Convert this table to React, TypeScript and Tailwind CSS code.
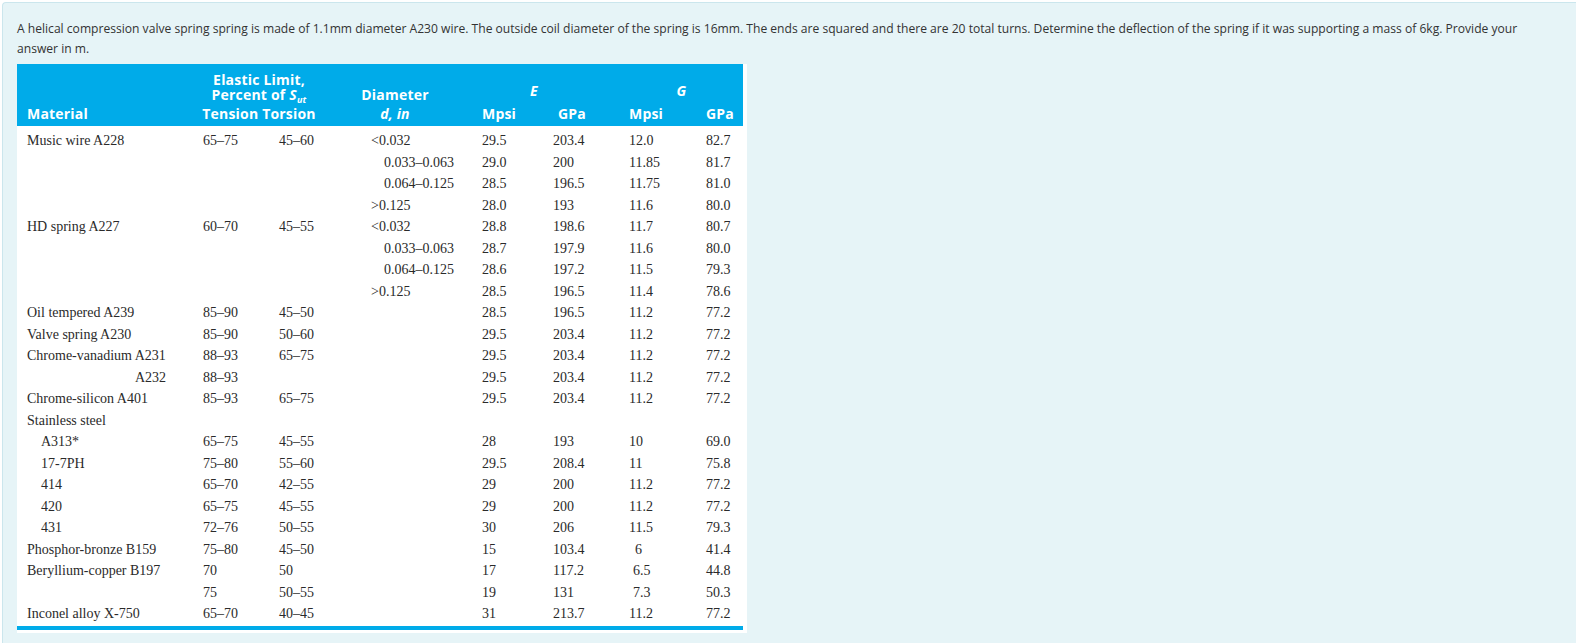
type Row = {
  mat?: string;
  matKind?: "sub" | "right";
  ten?: string;
  tor?: string;
  dia?: string;
  diaSub?: boolean;
  eM?: string;
  eG?: string;
  gM?: string;
  gMPad?: string;
  gG?: string;
};

const rows: Row[] = [
  { mat: "Music wire A228", ten: "65–75", tor: "45–60", dia: "<0.032", eM: "29.5", eG: "203.4", gM: "12.0", gG: "82.7" },
  { dia: "0.033–0.063", diaSub: true, eM: "29.0", eG: "200", gM: "11.85", gG: "81.7" },
  { dia: "0.064–0.125", diaSub: true, eM: "28.5", eG: "196.5", gM: "11.75", gG: "81.0" },
  { dia: ">0.125", eM: "28.0", eG: "193", gM: "11.6", gG: "80.0" },
  { mat: "HD spring A227", ten: "60–70", tor: "45–55", dia: "<0.032", eM: "28.8", eG: "198.6", gM: "11.7", gG: "80.7" },
  { dia: "0.033–0.063", diaSub: true, eM: "28.7", eG: "197.9", gM: "11.6", gG: "80.0" },
  { dia: "0.064–0.125", diaSub: true, eM: "28.6", eG: "197.2", gM: "11.5", gG: "79.3" },
  { dia: ">0.125", eM: "28.5", eG: "196.5", gM: "11.4", gG: "78.6" },
  { mat: "Oil tempered A239", ten: "85–90", tor: "45–50", eM: "28.5", eG: "196.5", gM: "11.2", gG: "77.2" },
  { mat: "Valve spring A230", ten: "85–90", tor: "50–60", eM: "29.5", eG: "203.4", gM: "11.2", gG: "77.2" },
  { mat: "Chrome-vanadium A231", ten: "88–93", tor: "65–75", eM: "29.5", eG: "203.4", gM: "11.2", gG: "77.2" },
  { mat: "A232", matKind: "right", ten: "88–93", eM: "29.5", eG: "203.4", gM: "11.2", gG: "77.2" },
  { mat: "Chrome-silicon A401", ten: "85–93", tor: "65–75", eM: "29.5", eG: "203.4", gM: "11.2", gG: "77.2" },
  { mat: "Stainless steel" },
  { mat: "A313*", matKind: "sub", ten: "65–75", tor: "45–55", eM: "28", eG: "193", gM: "10", gG: "69.0" },
  { mat: "17-7PH", matKind: "sub", ten: "75–80", tor: "55–60", eM: "29.5", eG: "208.4", gM: "11", gG: "75.8" },
  { mat: "414", matKind: "sub", ten: "65–70", tor: "42–55", eM: "29", eG: "200", gM: "11.2", gG: "77.2" },
  { mat: "420", matKind: "sub", ten: "65–75", tor: "45–55", eM: "29", eG: "200", gM: "11.2", gG: "77.2" },
  { mat: "431", matKind: "sub", ten: "72–76", tor: "50–55", eM: "30", eG: "206", gM: "11.5", gG: "79.3" },
  { mat: "Phosphor-bronze B159", ten: "75–80", tor: "45–50", eM: "15", eG: "103.4", gM: "6", gMPad: "pl-[6px]", gG: "41.4" },
  { mat: "Beryllium-copper B197", ten: "70", tor: "50", eM: "17", eG: "117.2", gM: "6.5", gMPad: "pl-[4px]", gG: "44.8" },
  { ten: "75", tor: "50–55", eM: "19", eG: "131", gM: "7.3", gMPad: "pl-[4px]", gG: "50.3" },
  { mat: "Inconel alloy X-750", ten: "65–70", tor: "40–45", eM: "31", eG: "213.7", gM: "11.2", gG: "77.2" },
];

function matClass(kind?: Row["matKind"]) {
  if (kind === "sub") return "w-[186px] pl-[24px]";
  if (kind === "right") return "w-[186px] pl-[118px]";
  return "w-[186px] pl-[10px]";
}

function TableRow({ r }: { r: Row }) {
  return (
    <div className="flex h-[21.5px] items-center whitespace-nowrap">
      <div className={matClass(r.matKind)}>{r.mat}</div>
      <div className="w-[76px]">{r.ten}</div>
      <div className="w-[91px]">{r.tor}</div>
      <div className={r.diaSub ? "w-[112px] pl-[14px]" : "w-[112px] pl-[1px]"}>{r.dia}</div>
      <div className="w-[71px]">{r.eM}</div>
      <div className="w-[76px]">{r.eG}</div>
      <div className={`w-[77px] ${r.gMPad ?? ""}`}>{r.gM}</div>
      <div className="w-[30px]">{r.gG}</div>
    </div>
  );
}

function SpringTable() {
  return (
    <div className="w-[730px] bg-white pb-[3px]">
      <div className="flex h-[62px] w-[726px] items-end whitespace-nowrap bg-[#00abe9] pb-[5px] font-['Open_Sans'] text-[14px] font-bold leading-[15px] tracking-[0.2px] text-white">
        <div className="w-[186px] pl-[10px]">Material</div>
        <div className="flex w-[112px] flex-col items-center">
          <span>Elastic Limit,</span>
          <span>
            Percent of <i>S</i>
            <span className="relative top-[3px] text-[9px] italic leading-none">ut</span>
          </span>
          <span className="mt-[4px]">Tension Torsion</span>
        </div>
        <div className="w-[47px]" />
        <div className="flex w-[66px] flex-col items-center">
          <span>Diameter</span>
          <span className="mt-[4px] italic">d, in</span>
        </div>
        <div className="w-[54px]" />
        <div className="flex w-[104px] flex-col">
          <span className="text-center italic">E</span>
          <div className="mt-[8px] flex justify-between">
            <span>Mpsi</span>
            <span>GPa</span>
          </div>
        </div>
        <div className="w-[43px]" />
        <div className="flex w-[105px] flex-col">
          <span className="text-center italic">G</span>
          <div className="mt-[8px] flex justify-between">
            <span>Mpsi</span>
            <span>GPa</span>
          </div>
        </div>
      </div>
      <div className="pt-[4px] font-['Liberation_Serif'] text-[14px] text-[#2a2a2a]">
        {rows.map((r, i) => (
          <TableRow key={i} r={r} />
        ))}
      </div>
      <div className="mt-[1px] h-[4px] w-[726px] bg-[#00abe9]" />
    </div>
  );
}

export default function App() {
  return (
    <div className="min-h-screen bg-white pl-[2px] pt-[2px]">
      <div className="min-h-[641px] rounded-tl-[4px] border-l border-t border-[#cbe6ed] bg-[#e6f4f7] pl-[14px] pt-[16px] font-['Open_Sans'] text-[#333333]">
        <p className="max-w-[1518px] text-[12.1px] leading-[20px]">
          A helical compression valve spring spring is made of 1.1mm diameter A230 wire. The outside coil diameter of the
          spring is 16mm. The ends are squared and there are 20 total turns. Determine the deflection of the spring if it
          was supporting a mass of 6kg. Provide your answer in m.
        </p>
        <div className="mt-[5px]">
          <SpringTable />
        </div>
      </div>
    </div>
  );
}
